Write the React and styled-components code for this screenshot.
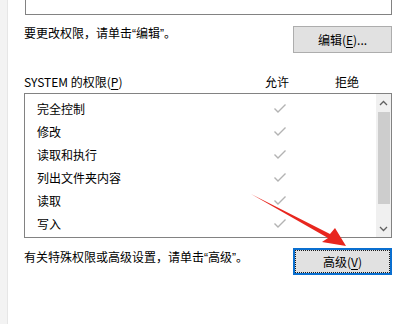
import styled, { createGlobalStyle } from "styled-components";

const GlobalStyle = createGlobalStyle`
  html, body {
    margin: 0;
    padding: 0;
    background: #ffffff;
  }
  body {
    font-family: "Noto Sans CJK SC", "Microsoft YaHei", sans-serif;
    font-size: 12px;
    color: #000;
  }
`;

const perms = ["完全控制", "修改", "读取和执行", "列出文件夹内容", "读取", "写入"];

function Check() {
  return (
    <svg width="14" height="11" viewBox="0 0 14 11">
      <polyline
        points="1.5,5.5 5,9 12.5,1.5"
        fill="none"
        stroke="#b3b3b3"
        strokeWidth="1.4"
      />
    </svg>
  );
}

function Chevron({ up }) {
  return (
    <svg width="9" height="6" viewBox="0 0 9 6">
      <polyline
        points={up ? "1,5 4.5,1.5 8,5" : "1,1 4.5,4.5 8,1"}
        fill="none"
        stroke="#606060"
        strokeWidth="1.3"
      />
    </svg>
  );
}

export default function App() {
  return (
    <>
      <GlobalStyle />
      <Window>
        <Edge />
        <Panel>
          <TopBox />
          <ActionRow $top={11}>
            <Hint>
              要更改权限，请单击<Quote>“</Quote>编辑<Quote>”</Quote>。
            </Hint>
            <Button>
              编辑(<u>E</u>)...
            </Button>
          </ActionRow>
          <Header>
            <HeaderName>
              SYSTEM 的权限(<u>P</u>)
            </HeaderName>
            <HeaderCol>允许</HeaderCol>
            <HeaderCol>拒绝</HeaderCol>
          </Header>
          <ListBox>
            <Rows>
              {perms.map((p) => (
                <Row key={p}>
                  <RowName>{p}</RowName>
                  <CheckCell>
                    <Check />
                  </CheckCell>
                  <CheckCell />
                </Row>
              ))}
            </Rows>
            <ScrollBar>
              <ArrowBtn>
                <Chevron up />
              </ArrowBtn>
              <Track>
                <Thumb />
              </Track>
              <ArrowBtn>
                <Chevron />
              </ArrowBtn>
            </ScrollBar>
          </ListBox>
          <ActionRow $top={10}>
            <Hint $shift={2}>
              有关特殊权限或高级设置，请单击<Quote>“</Quote>高级<Quote>”</Quote>。
            </Hint>
            <Button $focused>
              高级(<u>V</u>)
            </Button>
          </ActionRow>
        </Panel>
        <Arrow width="398" height="324" viewBox="0 0 398 324">
          <polygon
            points="251,194 330,234 335,228 346,246 322,242 328,238"
            fill="#e8261e"
          />
        </Arrow>
      </Window>
    </>
  );
}

const Window = styled.div`
  position: relative;
  width: 398px;
  height: 324px;
  display: flex;
  overflow: hidden;
  background: #fff;
`;

const Edge = styled.div`
  width: 7px;
  background: #f3f3f3;
  border-right: 1px solid #e6e6e6;
`;

const Panel = styled.div`
  flex: 1;
  padding: 0 6px 0 16px;
  display: flex;
  flex-direction: column;
`;

const TopBox = styled.div`
  height: 14px;
  border: 1px solid #828282;
  border-top: none;
  margin-left: 1px;
`;

const ActionRow = styled.div`
  margin-top: ${(p) => p.$top}px;
  display: flex;
  justify-content: space-between;
  align-items: flex-start;
`;

const Hint = styled.div`
  line-height: 14px;
  margin-top: ${(p) => p.$shift || 0}px;
  white-space: nowrap;
`;

const Quote = styled.span`
  font-family: "Liberation Sans", sans-serif;
`;

const Button = styled.div`
  position: relative;
  box-sizing: border-box;
  width: 99px;
  height: 27px;
  background: #e1e1e1;
  border: ${(p) => (p.$focused ? "2px solid #0a6fd0" : "1px solid #adadad")};
  display: flex;
  align-items: center;
  justify-content: center;
  line-height: 14px;
  u {
    text-decoration: underline;
    text-underline-offset: 2px;
  }
  ${(p) =>
    p.$focused &&
    `
    &::after {
      content: "";
      position: absolute;
      inset: 0;
      border: 1px dotted #1b1b1b;
    }
  `}
`;

const Header = styled.div`
  margin-top: 20px;
  height: 16px;
  display: flex;
  align-items: center;
`;

const HeaderName = styled.div`
  flex: 1;
  u {
    text-underline-offset: 2px;
  }
`;

const HeaderCol = styled.div`
  width: 70px;
  text-align: center;
  &:last-child {
    margin-right: 10px;
  }
`;

const ListBox = styled.div`
  margin-top: 4px;
  height: 143px;
  border: 1px solid #828282;
  display: flex;
`;

const Rows = styled.div`
  flex: 1;
  padding-top: 3px;
  overflow: hidden;
`;

const Row = styled.div`
  height: 23px;
  display: flex;
  align-items: center;
  padding-left: 12px;
`;

const RowName = styled.div`
  flex: 1;
`;

const CheckCell = styled.div`
  width: 70px;
  display: flex;
  justify-content: center;
  &:last-child {
    width: 61px;
  }
`;

const ScrollBar = styled.div`
  width: 15px;
  background: #f0f0f0;
  display: flex;
  flex-direction: column;
`;

const ArrowBtn = styled.div`
  height: 17px;
  display: flex;
  align-items: center;
  justify-content: center;
`;

const Track = styled.div`
  flex: 1;
  padding: 1px 1px 0 2px;
  display: flex;
  flex-direction: column;
`;

const Thumb = styled.div`
  height: 92px;
  background: #cdcdcd;
`;

const Arrow = styled.svg`
  position: absolute;
  left: 0;
  top: 0;
  pointer-events: none;
`;
